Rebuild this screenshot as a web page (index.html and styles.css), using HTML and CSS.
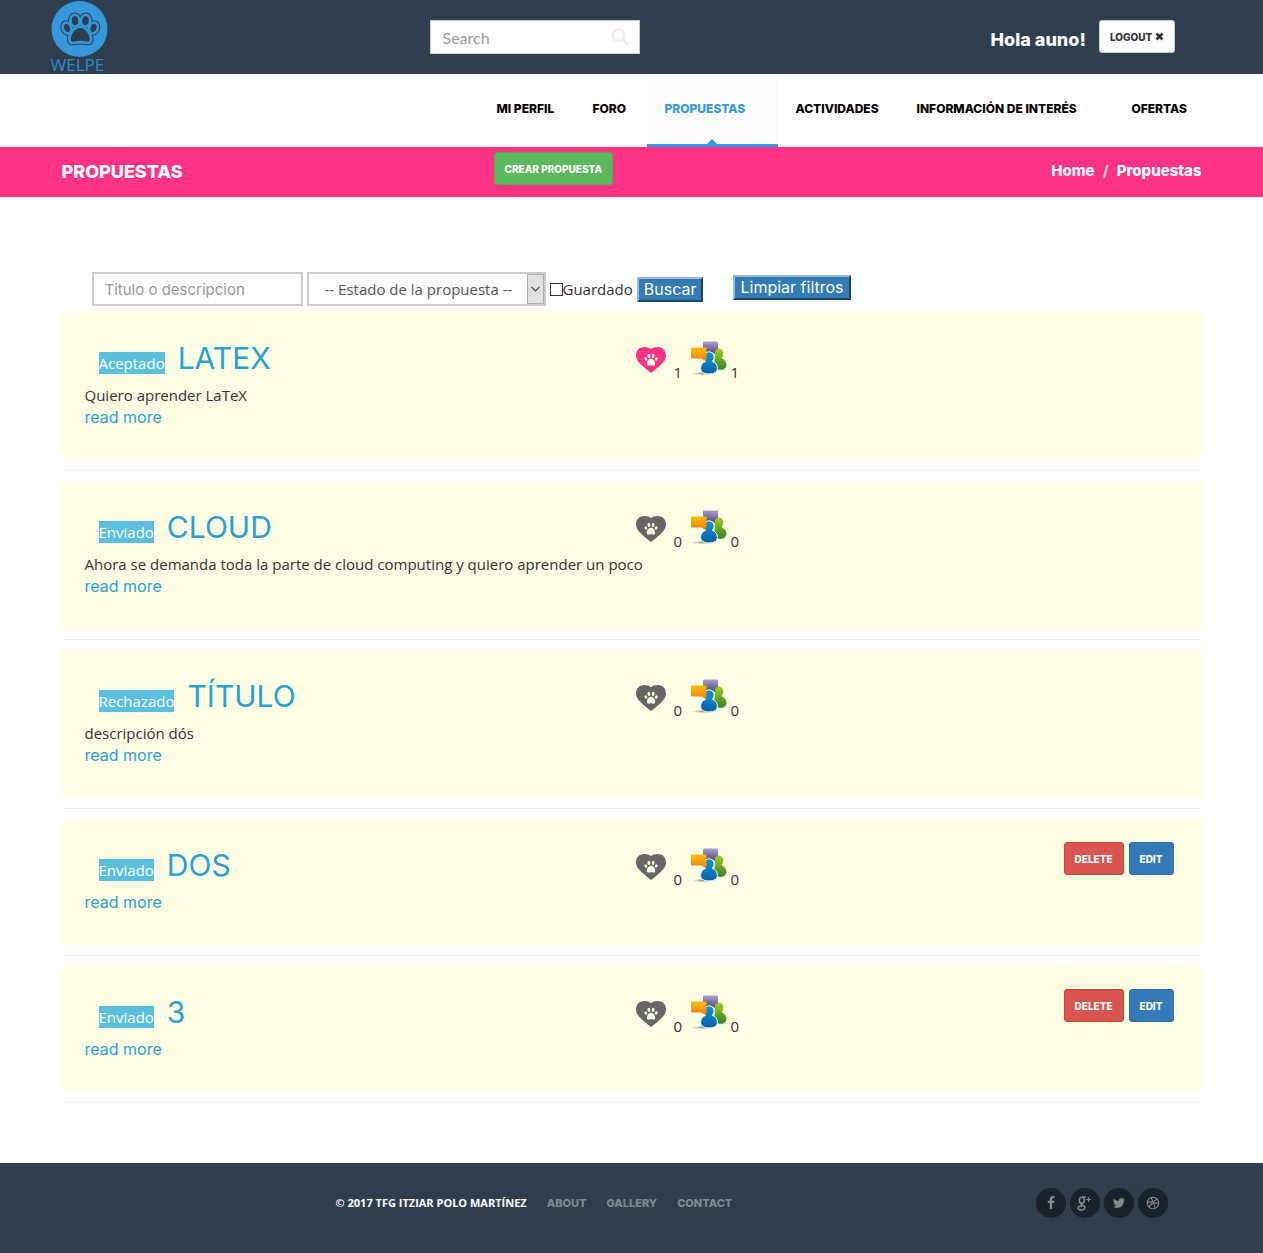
FILE: index.html
```html
<!DOCTYPE html>
<html lang="es">
<head>
<meta charset="utf-8">
<meta name="viewport" content="width=device-width, initial-scale=1">
<title>Propuestas - Welpe</title>
<link rel="stylesheet" href="styles.css">
</head>
<body>
<svg class="sprite" aria-hidden="true">
  <symbol id="paw" viewBox="0 0 16 15">
    <ellipse cx="2" cy="6.4" rx="1.5" ry="2" transform="rotate(-25 2 6.4)"/>
    <ellipse cx="5.5" cy="2.8" rx="1.6" ry="2.4" transform="rotate(-8 5.5 2.8)"/>
    <ellipse cx="10.5" cy="2.8" rx="1.6" ry="2.4" transform="rotate(8 10.5 2.8)"/>
    <ellipse cx="14" cy="6.4" rx="1.5" ry="2" transform="rotate(25 14 6.4)"/>
    <path d="M8 6.2c2.6 0 4.8 3 4.8 5.600c0 1.900-1.200 2.500-2.600 2.100c-1.500-.4-2.900-.4-4.400 0c-1.400.4-2.600-.2-2.600-2.100c0-2.600 2.200-5.600 4.800-5.600z"/>
  </symbol>
  <symbol id="heart" viewBox="0 0 30 26">
    <path fill="currentColor" d="M15 26C10 22 6 19 3 15.500C1 13 0 11 0 8.500C0 3.500 3.500 0 8 0C11 0 13.500 .8 15 2C16.500 .8 19 0 22 0C26.500 0 30 3.500 30 8.500C30 11 29 13 27 15.500C24 19 20 22 15 26Z"/>
    <use href="#paw" x="8" y="6.500" width="14" height="13" fill="#ffffe5"/>
  </symbol>
  <linearGradient id="gBlue" x1="0" y1="0" x2="0" y2="1"><stop offset="0" stop-color="#0d96dc"/><stop offset="1" stop-color="#0561a8"/></linearGradient>
  <linearGradient id="gGreen" x1="0" y1="0" x2="0" y2="1"><stop offset="0" stop-color="#a2cf1d"/><stop offset="1" stop-color="#358227"/></linearGradient>
  <linearGradient id="gPurple" x1="0" y1="0" x2="0" y2="1"><stop offset="0" stop-color="#a99fcd"/><stop offset="1" stop-color="#463873"/></linearGradient>
  <linearGradient id="gOrange" x1="0" y1="0" x2="0" y2="1"><stop offset="0" stop-color="#fbbd08"/><stop offset="1" stop-color="#ee7d13"/></linearGradient>
  <radialGradient id="gShade"><stop offset="0" stop-color="#555" stop-opacity=".7"/><stop offset="1" stop-color="#777" stop-opacity="0"/></radialGradient>
  <symbol id="people" viewBox="0 0 36 35">
    <ellipse cx="13" cy="32.500" rx="13" ry="1.800" fill="url(#gShade)"/>
    <ellipse cx="30" cy="28.300" rx="6" ry="1.500" fill="url(#gShade)"/>
    <path fill="url(#gPurple)" d="M13 .5h13q1 0 1 1v9q0 1-1 1h-1l.5 3l-4-3H13q-1 0-1-1v-9q0-1 1-1z"/>
    <path fill="url(#gGreen)" d="M24 13.500a4.300 4.300 0 1 1 8 0q0 2-1.500 3.500q5 2.500 5 7q0 4.500-7.500 4.500q-5 0-5-3z"/>
    <path fill="url(#gBlue)" stroke="#ffffe5" stroke-width="1" d="M12.800 16a5.200 5.200 0 1 1 10.400 0q0 2.500-1.800 4.300q5 2 5 7q0 5.700-8.400 5.700t-8.400-5.700q0-5 5-7q-1.800-1.800-1.800-4.300z"/>
    <path fill="url(#gOrange)" d="M1 6.500h13.500q1 0 1 1v9.500l-.5 3.500l-4.500-3H1q-1 0-1-1v-9q0-1 1-1z"/>
  </symbol>
</svg>

<header class="topbar">
  <div class="container topbar-row">
    <a class="logo" href="#">
      <svg viewBox="0 0 58 57" width="58" height="57" aria-hidden="true">
        <defs>
          <g id="logoPaw">
            <ellipse cx="16" cy="28" rx="3.600" ry="4.900" transform="rotate(-20 16 28)"/>
            <ellipse cx="24" cy="20.700" rx="3.900" ry="5.300" transform="rotate(-8 24 20.700)"/>
            <ellipse cx="34.500" cy="20.700" rx="3.900" ry="5.300" transform="rotate(8 34.500 20.700)"/>
            <ellipse cx="42.500" cy="28" rx="3.600" ry="4.900" transform="rotate(20 42.500 28)"/>
            <path d="M29.200 27.300c5.500 0 10.300 6.500 10.300 11.700c0 3.500-1.700 3.700-4.300 3.100q-6-1.300-12 0c-2.600.6-4.300.4-4.300-3.100c0-5.200 4.800-11.700 10.300-11.700z"/>
          </g>
        </defs>
        <circle cx="28.500" cy="29" r="28" fill="#3498db"/>
        <use href="#logoPaw" fill="none" stroke="#2c3e50" stroke-width="6"/>
        <use href="#logoPaw" fill="#3498db" stroke="#3498db" stroke-width="4"/>
        <use href="#logoPaw" fill="#2c3e50" stroke="#3498db" stroke-width="1.400"/>
      </svg>
      <span>WELPE</span>
    </a>
    <form class="search" role="search">
      <input type="search" placeholder="Search" aria-label="Search">
      <svg viewBox="0 0 1792 1792" width="18" height="18"><path d="M1216 832q0-185-131.500-316.500t-316.500-131.500-316.500 131.500-131.500 316.500 131.500 316.500 316.500 131.500 316.500-131.500 131.500-316.500zm512 832q0 52-38 90t-90 38q-54 0-90-38l-343-342q-179 124-399 124-143 0-273.500-55.500t-225-150-150-225-55.500-273.500 55.500-273.500 150-225 225-150 273.500-55.500 273.500 55.500 225 150 150 225 55.500 273.500q0 220-124 399l343 343q37 37 37 90z"/></svg>
    </form>
    <div class="session">
      <span class="hello">Hola auno!</span>
      <button class="btn btn-default" type="button">LOGOUT <svg viewBox="0 0 9 9" width="9" height="9"><path d="M1.500 1.500l6 6M7.500 1.500l-6 6" stroke="#333" stroke-width="2.600"/></svg></button>
    </div>
  </div>
</header>

<nav class="mainnav">
  <ul class="container">
    <li><a href="#">MI PERFIL</a></li>
    <li><a href="#">FORO</a></li>
    <li class="active"><a href="#">PROPUESTAS</a></li>
    <li><a href="#">ACTIVIDADES</a></li>
    <li><a href="#">INFORMACIÓN DE INTERÉS</a></li>
    <li><a href="#">OFERTAS</a></li>
  </ul>
</nav>

<section class="titlebar">
  <div class="container titlebar-row">
    <h1>PROPUESTAS</h1>
    <div><button class="btn btn-success" type="button">CREAR PROPUESTA</button></div>
    <ol class="breadcrumb">
      <li><a href="#">Home</a></li>
      <li class="current">Propuestas</li>
    </ol>
  </div>
</section>

<main class="container">
  <form class="filters">
    <input class="field" type="text" placeholder="Titulo o descripcion" aria-label="Titulo o descripcion">
    <span class="select">
      <select aria-label="Estado de la propuesta"><option>-- Estado de la propuesta --</option></select>
      <span class="select-arrow"><svg viewBox="0 0 9 6" width="9" height="6"><path d="M.5 .8l4 4l4-4" fill="none" stroke="#444" stroke-width="1.200"/></svg></span>
    </span>
    <label class="check"><input type="checkbox">Guardado</label>
    <button class="raised" type="button">Buscar</button>
    <button class="raised raised-clear" type="button">Limpiar filtros</button>
  </form>

  <article class="card">
    <div class="card-body">
      <h2><span class="badge">Aceptado</span><a href="#">LATEX</a></h2>
      <p>Quiero aprender LaTeX</p>
      <a class="more" href="#">read more</a>
    </div>
    <div class="stats">
      <svg class="heart liked" width="30" height="26"><use href="#heart"/></svg><span>1</span>
      <svg class="people" width="36" height="35"><use href="#people"/></svg><span>1</span>
    </div>
  </article>
  <hr>
  <article class="card">
    <div class="card-body">
      <h2><span class="badge">Enviado</span><a href="#">CLOUD</a></h2>
      <p>Ahora se demanda toda la parte de cloud computing y quiero aprender un poco</p>
      <a class="more" href="#">read more</a>
    </div>
    <div class="stats">
      <svg class="heart" width="30" height="26"><use href="#heart"/></svg><span>0</span>
      <svg class="people" width="36" height="35"><use href="#people"/></svg><span>0</span>
    </div>
  </article>
  <hr>
  <article class="card">
    <div class="card-body">
      <h2><span class="badge">Rechazado</span><a href="#">TÍTULO</a></h2>
      <p>descripción dós</p>
      <a class="more" href="#">read more</a>
    </div>
    <div class="stats">
      <svg class="heart" width="30" height="26"><use href="#heart"/></svg><span>0</span>
      <svg class="people" width="36" height="35"><use href="#people"/></svg><span>0</span>
    </div>
  </article>
  <hr>
  <article class="card">
    <div class="card-body">
      <h2><span class="badge">Enviado</span><a href="#">DOS</a></h2>
      <a class="more" href="#">read more</a>
    </div>
    <div class="stats">
      <svg class="heart" width="30" height="26"><use href="#heart"/></svg><span>0</span>
      <svg class="people" width="36" height="35"><use href="#people"/></svg><span>0</span>
    </div>
    <div class="actions">
      <button class="btn btn-danger" type="button">DELETE</button>
      <button class="btn btn-primary" type="button">EDIT</button>
    </div>
  </article>
  <hr>
  <article class="card">
    <div class="card-body">
      <h2><span class="badge">Enviado</span><a href="#">3</a></h2>
      <a class="more" href="#">read more</a>
    </div>
    <div class="stats">
      <svg class="heart" width="30" height="26"><use href="#heart"/></svg><span>0</span>
      <svg class="people" width="36" height="35"><use href="#people"/></svg><span>0</span>
    </div>
    <div class="actions">
      <button class="btn btn-danger" type="button">DELETE</button>
      <button class="btn btn-primary" type="button">EDIT</button>
    </div>
  </article>
  <hr>
</main>

<footer class="footer">
  <div class="container footer-row">
    <div class="footer-links">
      <span>© 2017 TFG ITZIAR POLO MARTÍNEZ</span>
      <a href="#">ABOUT</a>
      <a href="#">GALLERY</a>
      <a href="#">CONTACT</a>
    </div>
    <div class="social">
      <a href="#" aria-label="Facebook"><svg viewBox="0 0 1792 1792" width="14" height="14"><path d="M1343 12v264h-157q-86 0-116 36t-30 108v189h293l-39 296h-254v759h-306v-759h-255v-296h255v-218q0-186 104-288.500t277-102.500q147 0 228 12z"/></svg></a>
      <a href="#" aria-label="Google Plus"><svg viewBox="0 0 15 15" width="15" height="15"><g fill="none" stroke="currentColor"><ellipse cx="4.800" cy="4.200" rx="2.500" ry="3" stroke-width="1.600"/><path d="M5 1.100h4M4.500 7.200c-1.500 1 0 1.800 1.500 2.300c2.600.9 2.600 4.400-1.600 4.400c-4.500 0-4.500-3.900.6-4" stroke-width="1.500"/><path d="M11.500 1v5M9 3.500h5" stroke-width="1.200"/></g></svg></a>
      <a href="#" aria-label="Twitter"><svg viewBox="0 0 1792 1792" width="14" height="14"><path d="M1684 408q-67 98-162 167 1 14 1 42 0 130-38 259.500t-115.500 248.500-184.500 210.500-258 146-323 54.500q-271 0-496-145 35 4 78 4 225 0 401-138-105-2-188-64.500t-114-159.500q33 5 61 5 43 0 85-11-112-23-185.500-111.500t-73.500-205.500v-4q68 38 146 41-66-44-105-115t-39-154q0-88 44-163 121 149 294.500 238.500t371.500 99.500q-8-38-8-74 0-134 94.500-228.500t228.500-94.500q140 0 236 102 109-21 205-78-37 115-142 178 93-10 186-50z"/></svg></a>
      <a href="#" aria-label="Dribbble"><svg viewBox="0 0 14 14" width="14" height="14"><g fill="none" stroke="currentColor" stroke-width="1.100"><circle cx="7" cy="7" r="5.700"/><path d="M4.800 1.700c2 2.500 3.600 6 4.300 10.400M1.400 6.300c4 .1 7.500-.8 9.700-3.400M3 11.200c1.500-3.500 5-5 9.600-3.900"/></g></svg></a>
    </div>
  </div>
</footer>
</body>
</html>
```

FILE: styles.css
```css
* { box-sizing: border-box; }

body {
  margin: 0;
  background: #fff;
  color: #333;
  font-family: "Open Sans", sans-serif;
  font-size: 15px;
  line-height: 22px;
}

a { color: #2a9fd0; text-decoration: none; }
.sprite { position: absolute; width: 0; height: 0; }

.container {
  width: 100%;
  max-width: 1170px;
  margin: 0 auto;
  padding: 0 15px;
}

.btn {
  height: 33px;
  padding: 0 10px;
  border: 1px solid;
  border-radius: 3px;
  color: #fff;
  font: 800 10px/18px Inter, sans-serif;
}
.btn-default { background: #fff; border-color: #ccc; color: #333; }
.btn-success { background: #5cb85c; border-color: #4cae4c; }
.btn-danger { background: #d9534f; border-color: #d43f3a; }
.btn-primary { background: #337ab7; border-color: #2e6da4; }

/* Top bar */
.topbar { background: #2e3e4f; }
.topbar-row {
  display: grid;
  grid-template-columns: 379px 210px 1fr;
  align-items: start;
  padding: 0 42px 0 4px;
}
.logo { height: 74px; color: #2e8bcb; font-size: 17px; line-height: 16px; }
.logo svg, .logo span { display: block; }
.search { position: relative; margin-top: 20px; }
.search input {
  display: block;
  width: 100%;
  height: 34px;
  padding: 0 40px 0 12px;
  border: 1px solid #ccc;
  border-radius: 0;
  background: #fff;
  font: 16px Lato, sans-serif;
}
::placeholder { color: #999; opacity: 1; }
.search svg { position: absolute; top: 7px; right: 11px; fill: #ecf0f1; }
.session { display: flex; justify-content: flex-end; gap: 13px; padding-top: 20px; }
.hello { color: #fff; font: 800 18px/39px Inter, sans-serif; }

/* Main navigation */
.mainnav ul {
  display: grid;
  grid-template-columns: 96px 72px 131px 121px 215px 93px;
  justify-content: end;
  padding: 0 10px 0 0;
  list-style: none;
}
.mainnav a {
  display: block;
  height: 73px;
  padding-left: 18px;
  color: #000;
  font: 800 12px/69px Inter, sans-serif;
}
.mainnav .active a {
  position: relative;
  background: #fcfcfc;
  border-bottom: 3px solid #3498db;
  color: #3498db;
}
.mainnav .active a::after {
  content: "";
  position: absolute;
  bottom: 0;
  left: calc(50% - 5px);
  border: 5px solid transparent;
  border-top-width: 0;
  border-bottom-color: #3498db;
}

/* Page title */
.titlebar { background: #ff3385; }
.titlebar-row {
  display: grid;
  grid-template-columns: 432px 1fr auto;
  height: 50px;
}
.titlebar h1 { margin: 0; color: #fff; font: 800 18px/49px Inter, sans-serif; }
.titlebar .btn { margin-top: 5px; }
.breadcrumb {
  display: flex;
  margin: 0;
  padding: 0;
  list-style: none;
  color: #fff;
  font: 800 15px/48px Inter, sans-serif;
}
.breadcrumb a { color: #f5f5f5; }
.breadcrumb .current::before { content: "/"; padding: 0 8px; color: #ccc; }

/* Filters */
.filters {
  display: flex;
  align-items: center;
  gap: 4px;
  padding: 75px 30px 6px;
}
.field, .select select {
  height: 34px;
  border: 2px solid #ccc;
  border-radius: 0;
  background: #fff;
}
.field { width: 211px; padding: 0 11px; font: 15px Inter, sans-serif; }
.select { position: relative; width: 239px; }
.select select {
  display: block;
  width: 100%;
  padding: 0 16px;
  appearance: none;
  color: #555;
  font: 15px "Open Sans", sans-serif;
}
.select-arrow {
  position: absolute;
  inset: 2px 2px 2px auto;
  display: grid;
  place-items: center;
  width: 17px;
  border: 1px solid #adadad;
  background: #e1e1e1;
  pointer-events: none;
}
.check { display: flex; align-items: center; }
.check input {
  appearance: none;
  width: 13px;
  height: 13px;
  margin: 0;
  border: 1px solid #333;
  background: #fff;
}
.raised {
  height: 25px;
  padding: 0 5px;
  border: 2px solid;
  border-color: #99bcdb #1a4770 #1a4770 #99bcdb;
  background: #337ab7;
  color: #fff;
  font: 16px/20px Inter, sans-serif;
}
.raised-clear { margin: 0 0 4px 26px; }

/* Proposals */
.card {
  display: grid;
  grid-template-columns: minmax(0, 1fr) minmax(0, 1fr);
  min-height: 126px;
  background: #ffffe5;
  padding: 30px 23px 32px;
  position: relative;
}
.card-body { white-space: nowrap; }
.card h2 {
  display: flex;
  align-items: baseline;
  gap: 13px;
  height: 42px;
  margin: 0;
  padding: 0 14px;
  font: 400 30px/32px Inter, sans-serif;
}
.card p { margin: 0; }
.badge { background: #5bc0de; color: #fff; font: 15px/22px "Open Sans", sans-serif; }
.more { display: block; font: 16px/22px Inter, sans-serif; }
.stats { display: flex; align-items: flex-start; padding: 1px 0 0 4px; }
.stats span { width: 9px; padding-top: 18px; }
.heart { margin: 4px 8px 0 0; color: #666; }
.heart.liked { color: #ff3385; }
.people { margin: -2px 4px 0 8px; }
.actions {
  position: absolute;
  top: 23px;
  right: 28px;
  display: flex;
  gap: 5px;
}
hr { margin: 10px 0; border: 0; border-top: 1px solid #eee; }
main hr:last-child { margin-bottom: 60px; }

/* Footer */
.footer { background: #2e3e4f; }
.footer-row {
  display: flex;
  justify-content: space-between;
  height: 90px;
  padding: 25px 49px 0 289px;
}
.footer-links { display: flex; gap: 20px; line-height: 30px; font-size: 11px; font-weight: 700; color: #fff; }
.footer-links a { color: #7f8c8d; font-family: Inter, sans-serif; font-weight: 800; }
.social { display: flex; gap: 4px; }
.social a {
  display: grid;
  place-items: center;
  width: 30px;
  height: 30px;
  border-radius: 50%;
  background: #19212a;
  color: #7f8c8d;
}
.social svg { fill: currentColor; }
```
